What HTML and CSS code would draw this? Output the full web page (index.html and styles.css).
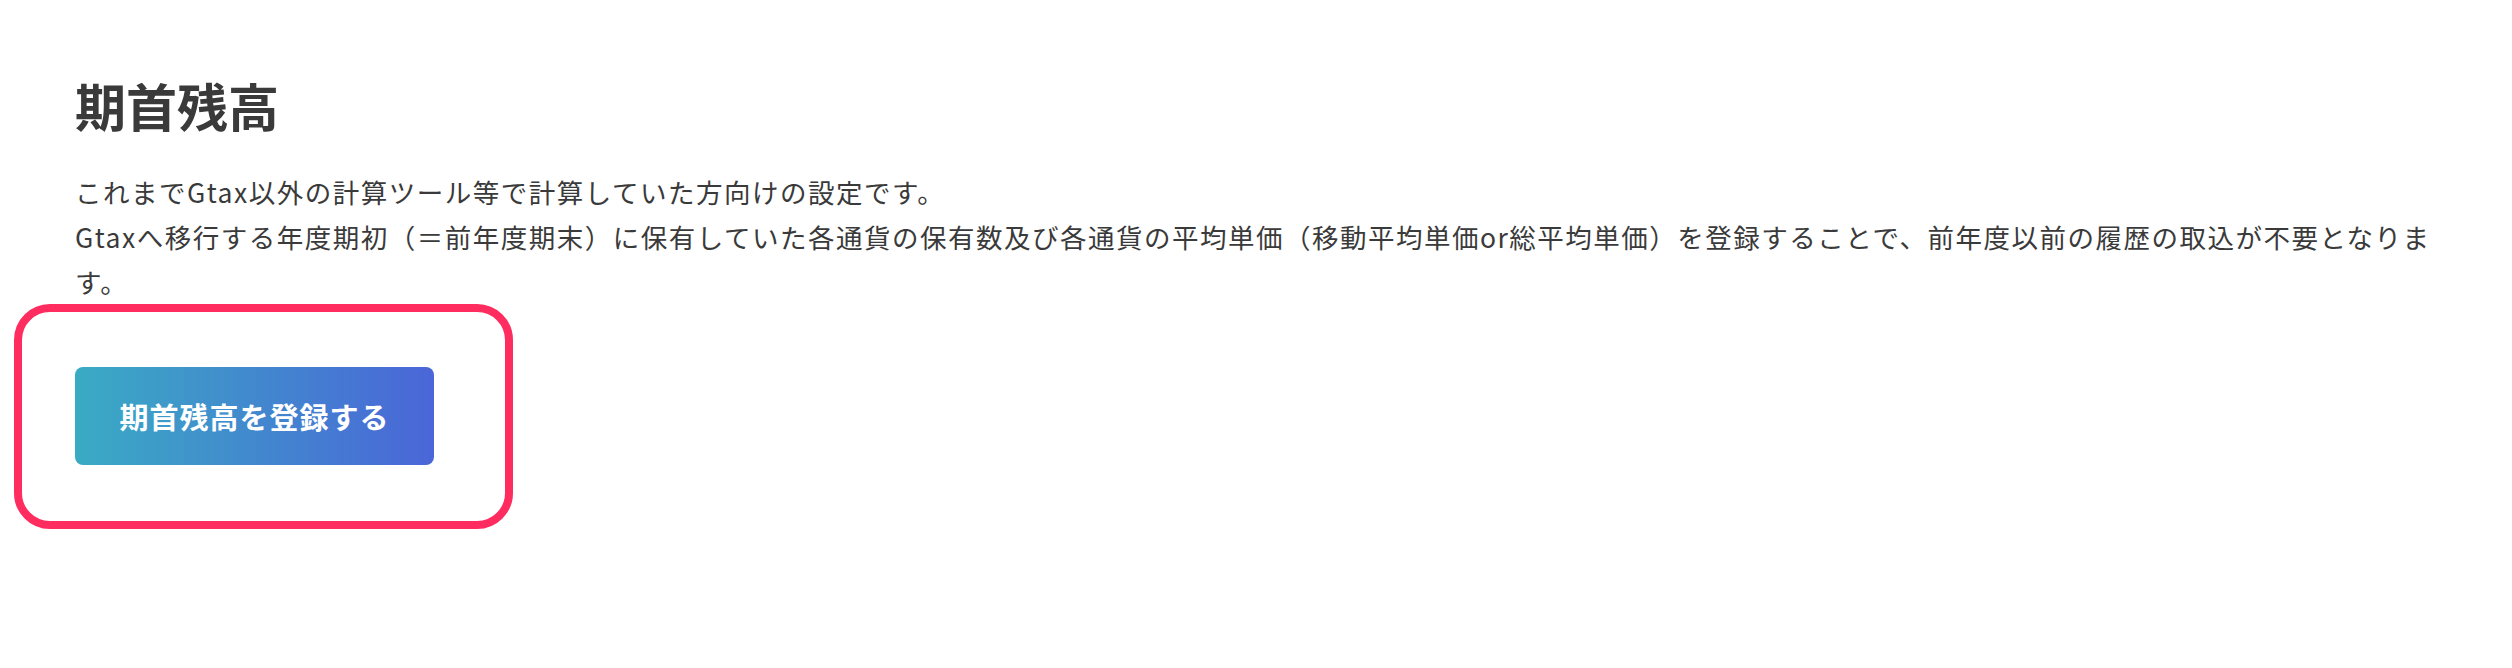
FILE: index.html
```html
<!DOCTYPE html>
<html lang="ja">
<head>
<meta charset="utf-8">
<title>期首残高</title>
<link rel="stylesheet" href="styles.css">
</head>
<body>
<main class="page">
  <h1 class="title">期首残高</h1>
  <p class="desc">これまでGtax以外の計算ツール等で計算していた方向けの設定です。<br>Gtaxへ移行する年度期初（＝前年度期末）に保有していた各通貨の保有数及び各通貨の平均単価（移動平均単価or総平均単価）を登録することで、前年度以前の履歴の取込が不要となります。</p>
  <div class="highlight">
    <button class="register" type="button">期首残高を登録する</button>
  </div>
</main>
</body>
</html>
```

FILE: styles.css
```css
html, body {
  margin: 0;
  padding: 0;
  background: #ffffff;
}

body {
  font-family: "Noto Sans CJK JP", "Noto Sans", sans-serif;
  color: #3a3a3a;
}

.page {
  padding: 75px 75px 0 75px;
}

.title {
  margin: 0;
  font-size: 51px;
  line-height: 61px;
  font-weight: 700;
  color: #3a3a3a;
}

.desc {
  margin: 33px 0 0 0;
  font-size: 26.5px;
  line-height: 45px;
  letter-spacing: 1.5px;
  color: #3a3a3a;
}

.highlight {
  display: inline-block;
  margin-left: -61px;
  padding: 55px 71px 56px 53px;
  border: 8px solid #ff2c5f;
  border-radius: 36px;
}

.register {
  display: block;
  width: 359px;
  height: 98px;
  border: none;
  border-radius: 8px;
  background: linear-gradient(90deg, #3aabc4 0%, #4a66d8 100%);
  color: #ffffff;
  font-family: "Noto Sans CJK JP", "Noto Sans", sans-serif;
  font-size: 29px;
  letter-spacing: 1px;
  font-weight: 700;
  padding: 0;
}
```
